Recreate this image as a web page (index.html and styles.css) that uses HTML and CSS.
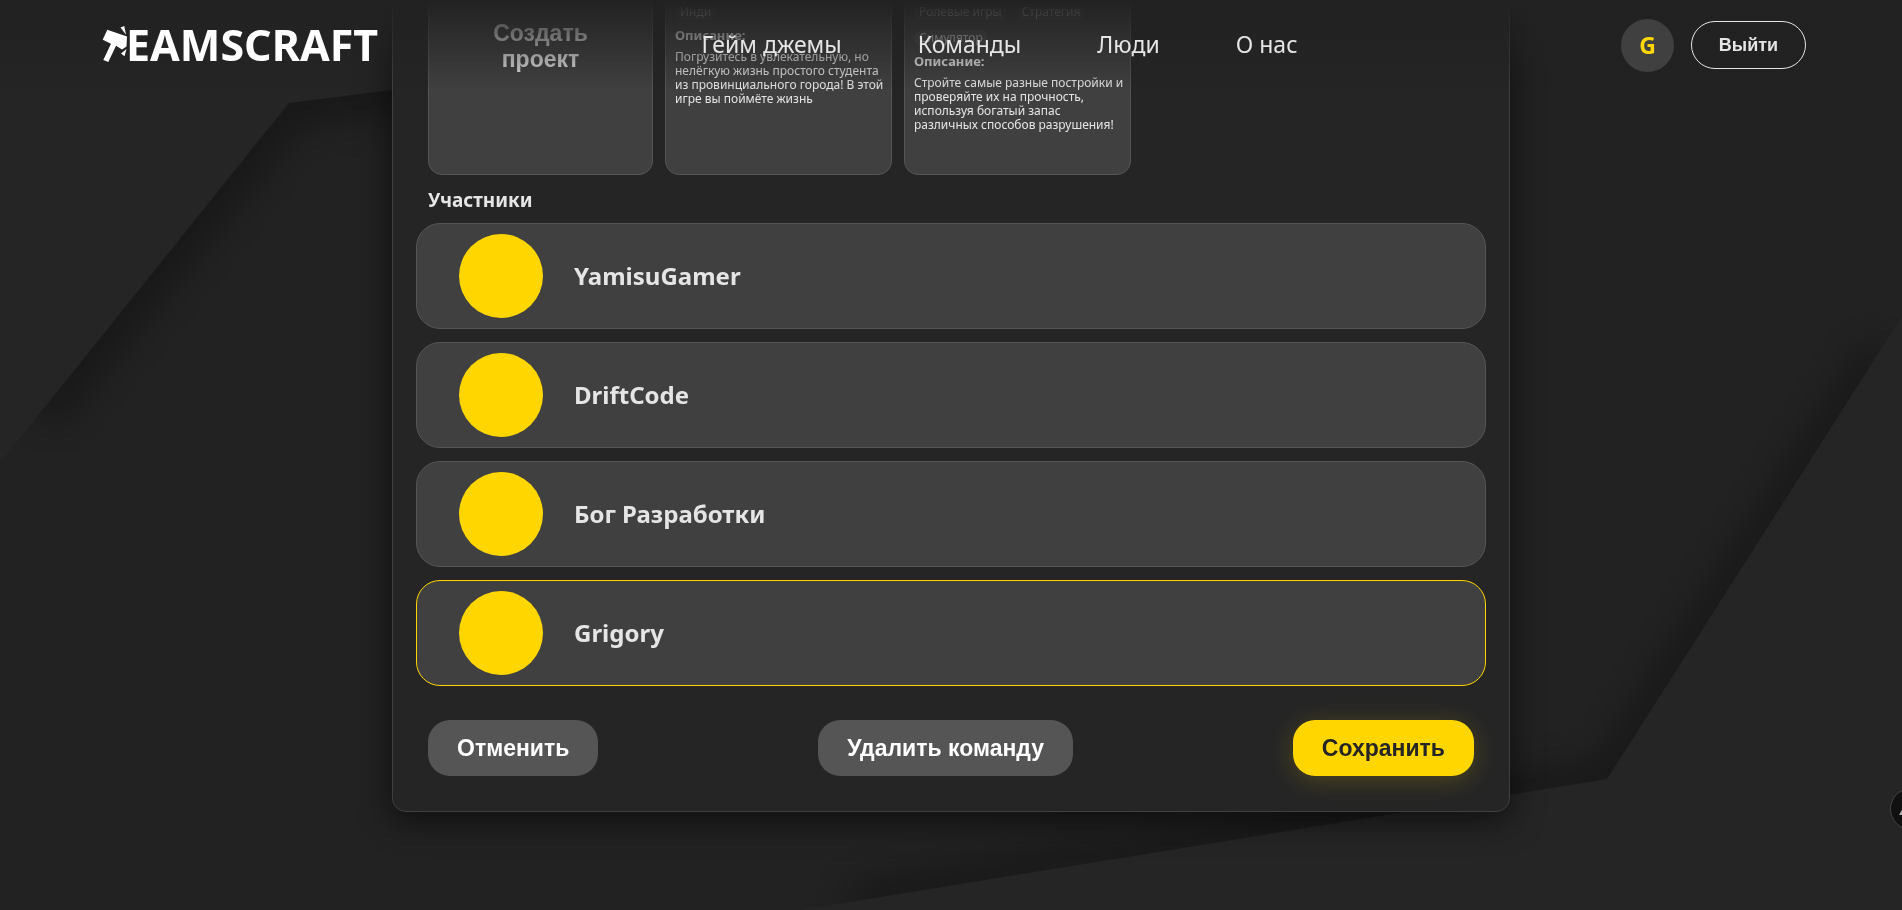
FILE: index.html
```html
<!DOCTYPE html>
<html lang="ru">
<head>
    <meta charset="UTF-8">
    <meta name="viewport" content="width=device-width, initial-scale=1.0">
    <title>Teamscraft</title>
    <link rel="stylesheet" href="styles.css">
</head>
<body>

    <svg class="backdrop" viewBox="0 0 1902 910" preserveAspectRatio="none" aria-hidden="true">
        <defs>
            <filter id="shade" x="-10%" y="-10%" width="120%" height="120%" color-interpolation-filters="sRGB">
                <feGaussianBlur stdDeviation="18"/>
            </filter>
            <clipPath id="middle">
                <path d="M0 463 289 103 1902 -100V316L1607 779 800 910H0Z"/>
            </clipPath>
        </defs>
        <g clip-path="url(#middle)">
            <rect width="1902" height="910" fill="#222222"/>
            <g opacity="0.3">
                <path d="M40 413 289 103 900 26" fill="none" stroke="#000" stroke-width="46" filter="url(#shade)"/>
                <path d="M1882 350 1607 779 850 902" fill="none" stroke="#000" stroke-width="36" filter="url(#shade)"/>
            </g>
        </g>
    </svg>

    <header class="header">
        <a class="logo" href="#" aria-label="Teamscraft">
            <svg class="hammer" viewBox="0 0 24 38" aria-hidden="true">
                <path d="M5.3 3.7 25 10.5 24.5 20.5 20 23.5 14 19.7 6.3 36 1.3 34 9 17.7.7 13.7Z" fill="#fff"/>
                <path d="M18.5 1.5 22.3 0 24 8.7ZM24.5 23 19 27.5 22.5 30.3Z" fill="#fff"/>
            </svg>
            <span>EAMSCRAFT</span>
        </a>
        <nav class="nav">
            <a href="#">Гейм джемы</a>
            <a href="#">Команды</a>
            <a href="#">Люди</a>
            <a href="#">О нас</a>
        </nav>
        <div class="account">
            <a class="avatar" href="#">G</a>
            <button class="logout" type="button">Выйти</button>
        </div>
    </header>

    <main class="team">
        <div class="projects">
            <button class="project create" type="button">Создать проект</button>
            <article class="project">
                <div class="cover"></div>
                <div class="tags"><span>Инди</span></div>
                <h4>Описание:</h4>
                <p>Погрузитесь в увлекательную, но нелёгкую жизнь простого студента из провинциального города! В этой игре вы поймёте жизнь</p>
            </article>
            <article class="project">
                <div class="cover"></div>
                <div class="tags"><span>Ролевые игры</span><span>Стратегия</span><span>Симулятор</span></div>
                <h4>Описание:</h4>
                <p>Стройте самые разные постройки и проверяйте их на прочность, используя богатый запас различных способов разрушения!</p>
            </article>
        </div>

        <h3>Участники</h3>
        <ul class="members">
            <li><span class="photo"></span>YamisuGamer</li>
            <li><span class="photo"></span>DriftCode</li>
            <li><span class="photo"></span>Бог Разработки</li>
            <li class="current"><span class="photo"></span>Grigory</li>
        </ul>

        <div class="actions">
            <button type="button">Отменить</button>
            <button type="button">Удалить команду</button>
            <button class="save" type="button">Сохранить</button>
        </div>
    </main>

    <button class="widget" type="button" aria-label="Открыть панель">
        <svg viewBox="0 0 20 20" aria-hidden="true"><path d="M1 16 7 5 12 16Z" fill="#aaa"/></svg>
    </button>

</body>
</html>
```
FILE: styles.css
```css
* {
    box-sizing: border-box;
}
body {
    margin: 0;
    min-height: 100vh;
    overflow-x: hidden;
    background-color: #252525;
    color: #e5e5e5;
    font-family: "Noto Sans", "Open Sans", sans-serif;
}
button {
    font-family: "Liberation Sans", Arial, sans-serif;
    font-weight: bold;
    cursor: pointer;
}
.backdrop {
    position: fixed;
    inset: 0;
    width: 100%;
    height: 100%;
    z-index: -1;
}

/* header */
.header {
    position: fixed;
    top: 0;
    left: 0;
    right: 0;
    z-index: 10;
    display: flex;
    justify-content: space-between;
    align-items: center;
    height: 90px;
    padding: 0 96px;
    background: linear-gradient(#222222, rgba(34, 34, 34, 0));
}
.logo {
    display: flex;
    align-items: center;
    padding-left: 6px;
    color: #fff;
    font-size: 43px;
    font-weight: bold;
    line-height: 48px;
    text-decoration: none;
}
.hammer {
    width: 24px;
    height: 38px;
    overflow: visible;
}
.nav {
    display: flex;
    gap: 76px;
    padding-bottom: 2px;
}
.nav a {
    color: #e5e5e5;
    font-size: 23px;
    text-decoration: none;
}
.account {
    display: flex;
    align-items: center;
    gap: 17px;
}
.avatar {
    display: flex;
    align-items: center;
    justify-content: center;
    width: 53px;
    height: 53px;
    border-radius: 50%;
    background-color: #404040;
    color: #ffd600;
    font-size: 23px;
    font-weight: bold;
    text-decoration: none;
}
.logout {
    width: 115px;
    height: 48px;
    border: 1px solid #e5e5e5;
    border-radius: 24px;
    background: none;
    color: #e5e5e5;
    font-size: 18px;
}

/* team card */
.team {
    width: calc(100% - 784px);
    min-width: 1117px;
    margin: -120px auto 97px;
    padding: 36px 23px 35px;
    border: 1px solid #404040;
    border-radius: 14px;
    background-color: #252525;
    box-shadow: 0 8px 32px rgba(0, 0, 0, 0.6);
}
.projects {
    display: flex;
    gap: 12px;
    padding: 0 12px;
}
.project {
    width: 227px;
    height: 258px;
    padding: 9px 3px 9px 9px;
    border: 1px solid #555555;
    border-radius: 14px;
    background-color: #404040;
}
.create {
    width: 225px;
    padding: 0 50px;
    color: #e5e5e5;
    font-size: 23px;
    line-height: 26px;
}
.cover {
    height: 77px;
}
.tags {
    display: flex;
    flex-wrap: wrap;
    gap: 10px;
}
.tags span {
    padding: 0 5px;
    border-radius: 8px;
    background-color: #4c4c4c;
    color: #ccc;
    font-size: 12px;
    line-height: 16px;
}
.project h4 {
    margin: 8px 0;
    font-size: 13px;
    line-height: 14px;
}
.project p {
    margin: 0;
    font-size: 12px;
    line-height: 14px;
}
h3 {
    margin: 13px 12px 11px;
    font-size: 19px;
    line-height: 24px;
}
.members {
    display: flex;
    flex-direction: column;
    gap: 13px;
    margin: 0;
    padding: 0;
    list-style: none;
}
.members li {
    display: flex;
    align-items: center;
    gap: 31px;
    height: 106px;
    padding: 0 42px;
    border: 1px solid #555555;
    border-radius: 24px;
    background-color: #404040;
    font-size: 24px;
    line-height: 32px;
    font-weight: bold;
}
.members .current {
    border-color: #ffd600;
}
.photo {
    width: 84px;
    height: 84px;
    border-radius: 50%;
    background-color: #ffd600;
}
.actions {
    display: flex;
    justify-content: space-between;
    margin-top: 34px;
    padding: 0 12px;
}
.actions button {
    height: 56px;
    padding: 0 29px;
    border: none;
    border-radius: 22px;
    background-color: #555555;
    color: #fff;
    font-size: 23px;
}
.actions .save {
    background-color: #ffd600;
    color: #252525;
    box-shadow: 0 4px 24px rgba(255, 214, 0, 0.2);
}

/* floating button, mostly hidden behind the window edge */
.widget {
    position: fixed;
    right: -30px;
    bottom: 80px;
    width: 42px;
    height: 42px;
    padding: 0 0 0 7px;
    border: 1px solid #444;
    border-radius: 50%;
    background-color: #111;
}
.widget svg {
    display: block;
    width: 20px;
    height: 20px;
}
```
